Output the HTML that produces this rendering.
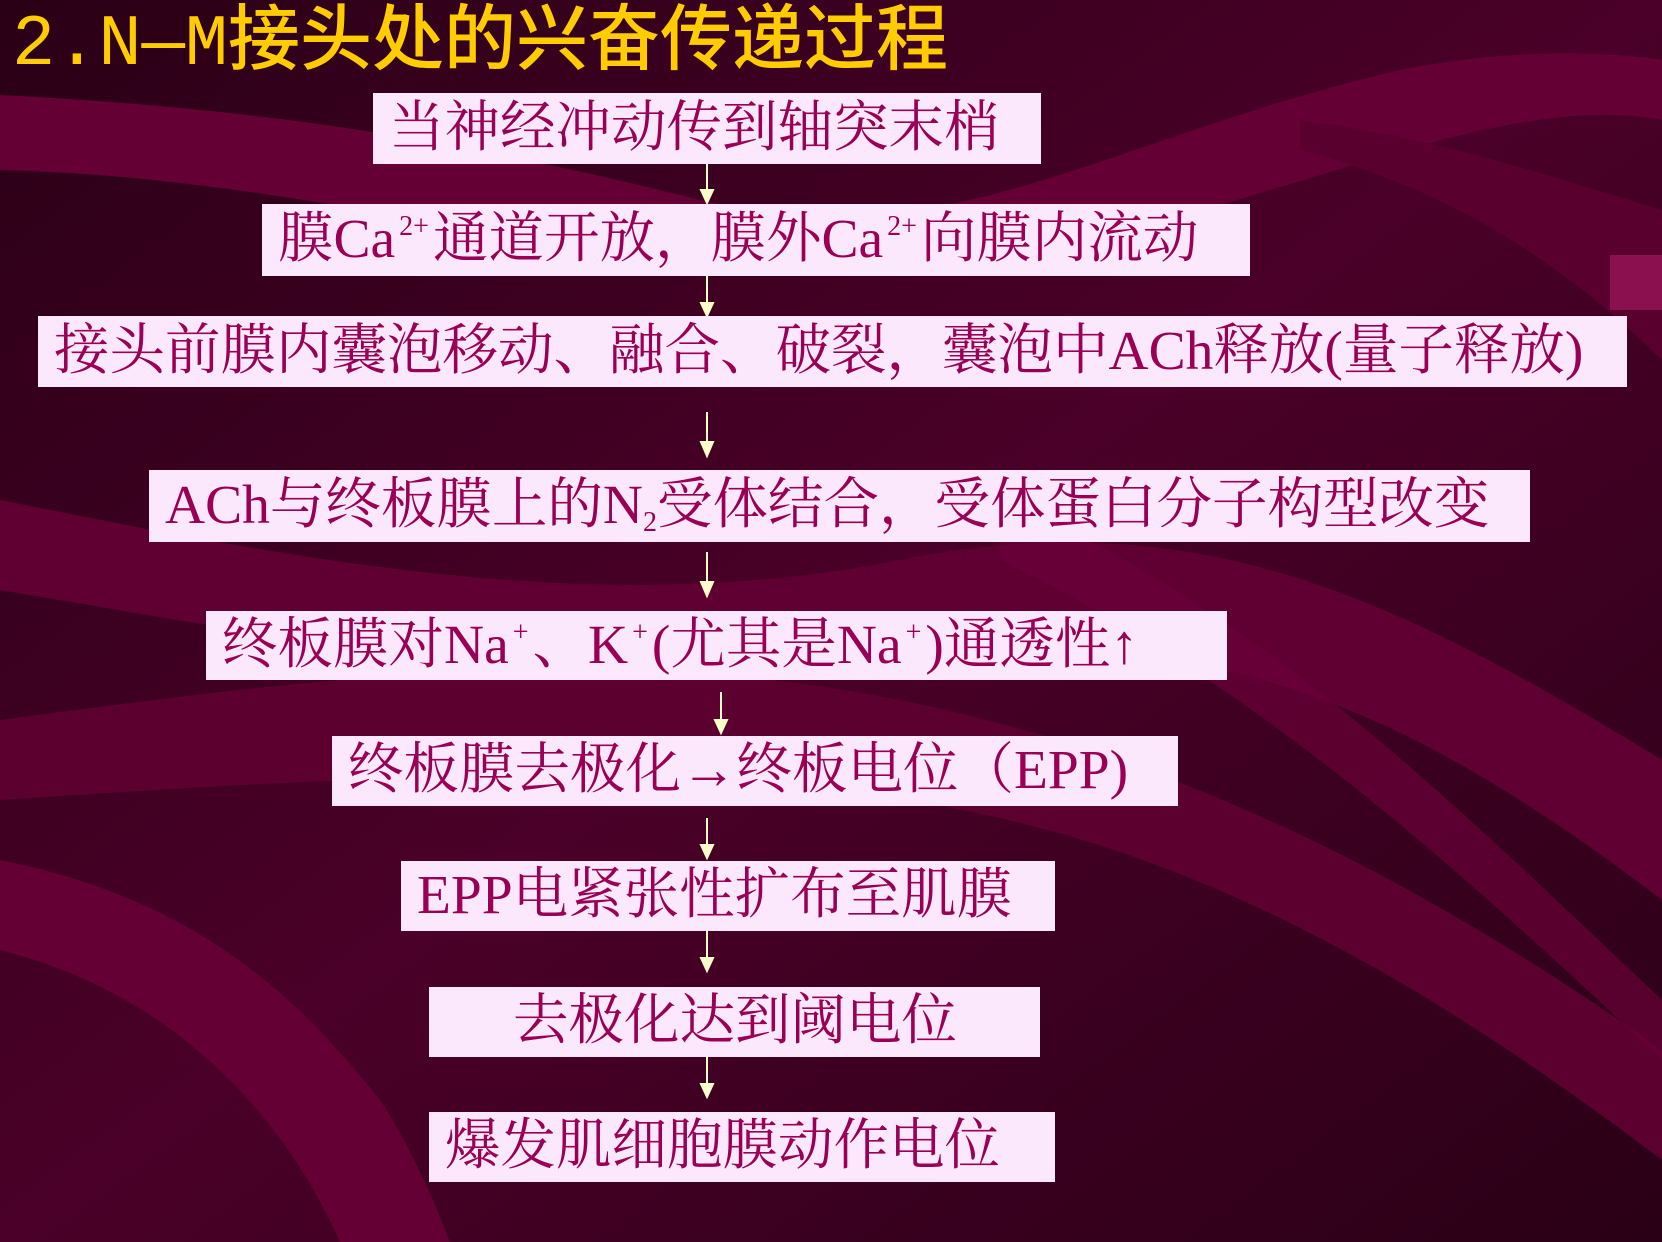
<!DOCTYPE html>
<html><head><meta charset="utf-8"><style>
html,body{margin:0;padding:0}
body{width:1662px;height:1242px;position:relative;overflow:hidden;background:#3a0020;font-family:"Liberation Serif","Noto Serif CJK SC",serif}
.bg{position:absolute;left:0;top:0}
.t{position:absolute;left:12px;top:0px;color:#ffcc00;font-family:"Liberation Mono","Noto Sans CJK SC",sans-serif;font-size:72px;line-height:90px;font-weight:500;white-space:nowrap}
.b{position:absolute;background:#fce8fc;color:#990055;font-size:55.5px;line-height:70px;white-space:nowrap;box-sizing:border-box;padding-left:16px}
sup{font-size:28px;vertical-align:22px;line-height:0;margin:0 4px}
sub{font-size:28px;vertical-align:-8px;line-height:0}
</style></head><body>
<svg class="bg" width="1662" height="1242" viewBox="0 0 1662 1242">
<defs><linearGradient id="g" x1="0" y1="0" x2="1" y2="1"><stop offset="0" stop-color="#2a0016"/><stop offset="0.5" stop-color="#4a0028"/><stop offset="1" stop-color="#2a0016"/></linearGradient></defs>
<rect width="1662" height="1242" fill="url(#g)"/>
<path d="M0 95 C300 110 500 150 700 200 C950 260 1100 140 1400 70 C1550 40 1662 60 1662 60 L1662 120 C1500 90 1300 200 1000 260 C700 320 400 180 0 170Z" fill="#650034"/>
<path d="M1300 120 C1450 140 1560 180 1662 210 L1662 360 C1560 260 1450 190 1300 150Z" fill="#5a002e"/>
<path d="M0 500 C300 560 600 620 900 560 C1200 500 1400 600 1662 760 L1662 900 C1400 700 1200 620 900 660 C600 700 300 640 0 590Z" fill="#600032"/>
<path d="M0 720 C300 680 600 640 900 700 C1200 760 1450 900 1662 1050 L1662 1160 C1450 1000 1200 840 900 800 C600 760 300 780 0 800Z" fill="#5c0030"/>
<path d="M0 860 C200 900 300 1000 380 1100 C420 1160 450 1242 450 1242 L340 1242 C300 1150 200 1000 0 950Z" fill="#650034"/>
<path d="M1000 500 C1250 600 1450 800 1662 1000 L1662 1060 C1450 860 1250 680 1000 560Z" fill="#6a0038" opacity="0.7"/>
<rect x="1610" y="255" width="52" height="55" fill="#8a1050"/>
<g stroke="#ffffcc" stroke-width="2" fill="#ffffcc">
<line x1="707" y1="164" x2="707" y2="192"/><polygon points="701,190 713,190 707,203"/>
<line x1="707" y1="276" x2="707" y2="305"/><polygon points="701,303 713,303 707,316"/>
<line x1="707" y1="412" x2="707" y2="444"/><polygon points="701,442 713,442 707,456"/>
<line x1="707" y1="552" x2="707" y2="584"/><polygon points="701,582 713,582 707,596"/>
<line x1="721" y1="692" x2="721" y2="722"/><polygon points="715,720 727,720 721,733"/>
<line x1="707" y1="818" x2="707" y2="847"/><polygon points="701,845 713,845 707,858"/>
<line x1="707" y1="931" x2="707" y2="960"/><polygon points="701,958 713,958 707,971"/>
<line x1="707" y1="1057" x2="707" y2="1086"/><polygon points="701,1084 713,1084 707,1097"/>
</g>
</svg>
<div class="t">2.N—M接头处的兴奋传递过程</div>
<div class="b" style="left:373px;top:93px;width:668px;height:71px;line-height:71px">当神经冲动传到轴突末梢</div>
<div class="b" style="left:262px;top:204px;width:988px;height:72px;line-height:72px">膜Ca<sup>2+</sup>通道开放，膜外Ca<sup>2+</sup>向膜内流动</div>
<div class="b" style="left:38px;top:316px;width:1589px;height:71px;line-height:71px">接头前膜内囊泡移动、融合、破裂，囊泡中ACh释放(量子释放)</div>
<div class="b" style="left:149px;top:470px;width:1381px;height:72px;line-height:72px">ACh与终板膜上的N<sub>2</sub>受体结合，受体蛋白分子构型改变</div>
<div class="b" style="left:206px;top:611px;width:1021px;height:69px;line-height:69px">终板膜对Na<sup>+</sup>、K<sup>+</sup>(尤其是Na<sup>+</sup>)通透性↑</div>
<div class="b" style="left:332px;top:736px;width:846px;height:70px;line-height:70px">终板膜去极化→终板电位（EPP)</div>
<div class="b" style="left:401px;top:861px;width:654px;height:70px;line-height:70px">EPP电紧张性扩布至肌膜</div>
<div class="b" style="left:429px;top:987px;width:611px;height:70px;line-height:70px;padding-left:84px">去极化达到阈电位</div>
<div class="b" style="left:429px;top:1112px;width:626px;height:70px;line-height:70px">爆发肌细胞膜动作电位</div>
</body></html>
